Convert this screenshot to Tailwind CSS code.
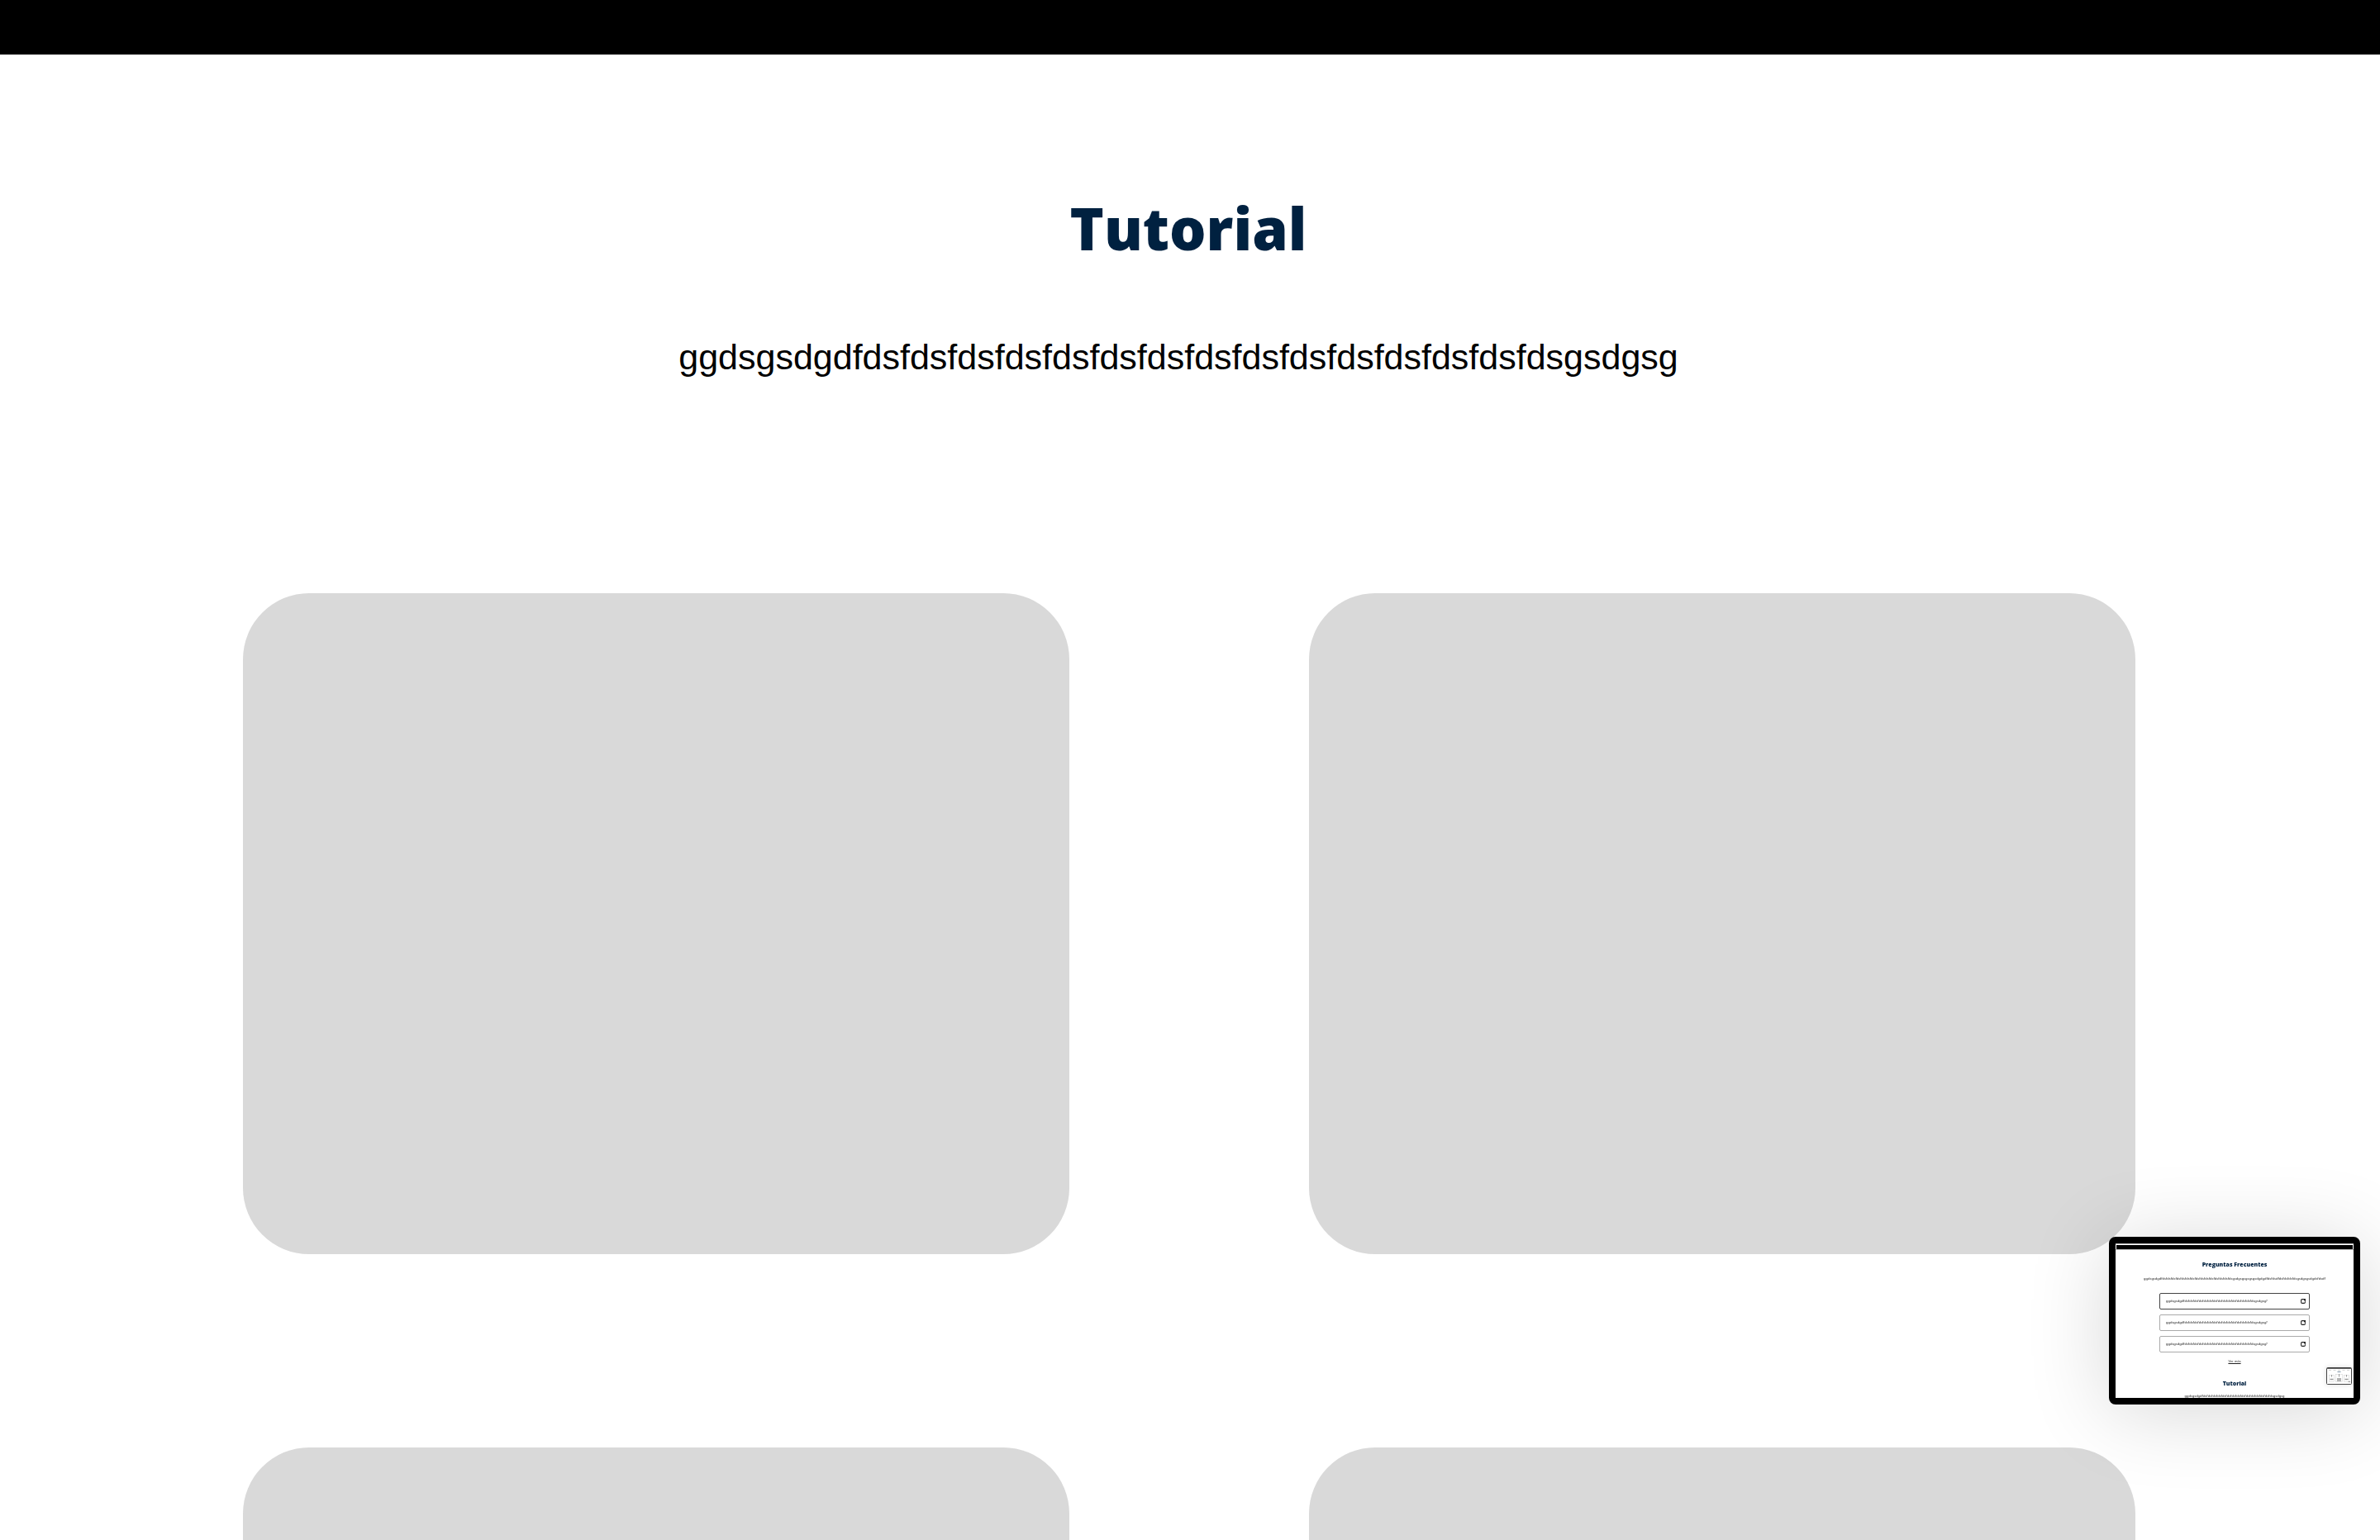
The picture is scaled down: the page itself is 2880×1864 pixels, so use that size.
<!DOCTYPE html>
<html lang="es">
<head>
<meta charset="utf-8">
<title>Tutorial</title>
<script src="https://cdn.jsdelivr.net/npm/@tailwindcss/browser@4"></script>
</head>
<body class="bg-white text-black font-['Liberation_Sans',sans-serif] h-screen overflow-hidden">
<header class="h-[66px] bg-black"></header>
<main>
  <section class="pt-[166px] text-center">
    <h1 class="pr-1 font-['Open_Sans',sans-serif] font-extrabold text-[70px] leading-[88px] text-[#002140]">Tutorial</h1>
    <p class="mt-[84px] pr-7 text-[43px] leading-[56px]">ggdsgsdgdfdsfdsfdsfdsfdsfdsfdsfdsfdsfdsfdsfdsfdsfdsfdsgsdgsg</p>
  </section>
  <section class="mt-[258px] pl-[294px] pr-[296px] grid grid-cols-2 gap-x-[290px] gap-y-[234px]">
    <div class="aspect-[5/4] rounded-[80px] bg-[#d9d9d9]"></div>
    <div class="aspect-[5/4] rounded-[80px] bg-[#d9d9d9]"></div>
    <div class="aspect-[5/4] rounded-[80px] bg-[#d9d9d9]"></div>
    <div class="aspect-[5/4] rounded-[80px] bg-[#d9d9d9]"></div>
  </section>
</main>

<!-- Floating page preview -->
<aside class="fixed right-6 bottom-[164px] w-[304px] h-[203px] rounded-lg border-8 border-black bg-white shadow-[0_8px_100px_rgba(0,0,0,0.16)] font-['Noto_Sans',sans-serif] text-[4px] leading-[6px] text-[#222]">
  <div class="h-full overflow-hidden flex flex-col items-center">
    <div class="shrink-0 self-stretch h-2 border-t border-b border-[#bbb] px-px pt-px"><div class="h-full bg-black"></div></div>
    <h2 class="shrink-0 mt-3 font-extrabold text-[7px] leading-3 text-[#002140] font-['Open_Sans',sans-serif]">Preguntas Frecuentes</h2>
    <p class="shrink-0 mt-2 whitespace-nowrap">ggdsgsdgdfdsfdsfdsfdsfdsfdsfdsfdsfdsfdsfdsfdsfdsfdsfdsgsdgsgsgsgsgsdgdgdfdsfdsdfdsfdsfdsfdsgsdgsgsdgdsfdsdf</p>
    <div class="shrink-0 mt-3.5 flex flex-col gap-1.5 w-[182px]">
      <button class="h-5 pl-[7px] pr-1 rounded-xs border border-[#444] flex items-center justify-between">
        <span>ggdsgsdgdfdsfdsfdsfdsfdsfdsfdsfdsfdsfdsfdsfdsfdsfdsfdsgsdgsg?</span>
        <svg class="size-1.5" viewBox="0 0 10 10" fill="none" stroke="#222" stroke-width="1.8"><path d="M5 1H3Q1 1 1 3V7Q1 9 3 9H7Q9 9 9 7V6M6 1H9V4Z"/></svg>
      </button>
      <button class="h-5 pl-[7px] pr-1 rounded-xs border border-[#aaa] flex items-center justify-between">
        <span>ggdsgsdgdfdsfdsfdsfdsfdsfdsfdsfdsfdsfdsfdsfdsfdsfdsfdsgsdgsg?</span>
        <svg class="size-1.5" viewBox="0 0 10 10" fill="none" stroke="#222" stroke-width="1.8"><path d="M5 1H3Q1 1 1 3V7Q1 9 3 9H7Q9 9 9 7V6M6 1H9V4Z"/></svg>
      </button>
      <button class="h-5 pl-[7px] pr-1 rounded-xs border border-[#aaa] flex items-center justify-between">
        <span>ggdsgsdgdfdsfdsfdsfdsfdsfdsfdsfdsfdsfdsfdsfdsfdsfdsfdsgsdgsg?</span>
        <svg class="size-1.5" viewBox="0 0 10 10" fill="none" stroke="#222" stroke-width="1.8"><path d="M5 1H3Q1 1 1 3V7Q1 9 3 9H7Q9 9 9 7V6M6 1H9V4Z"/></svg>
      </button>
    </div>
    <a href="#" class="shrink-0 mt-2 underline">Ver más</a>
    <h2 class="shrink-0 mt-[18px] font-extrabold text-[7px] leading-3 text-[#002140] font-['Open_Sans',sans-serif]">Tutorial</h2>
    <p class="shrink-0 mt-1.5 whitespace-nowrap">ggdsgsdgdfdsfdsfdsfdsfdsfdsfdsfdsfdsfdsfdsfdsfdsfdsfdsgsdgsg</p>
  </div>
  <svg class="absolute right-0.5 bottom-4 w-[31px] h-[21px] shadow-[0_0_6px_rgba(0,0,0,0.15)]" viewBox="0 0 31 21">
    <rect x=".5" y=".5" width="30" height="20" rx="1" fill="#fff" stroke="#444"/>
    <path d="M1 1.2H30" stroke="#222"/>
    <path d="M3 3.5H28" stroke="#bbb" stroke-width=".6" stroke-dasharray="3 2.5"/>
    <path d="M13.500 5.500H17.500" stroke="#7d93a8"/>
    <g fill="none" stroke="#ccc" stroke-width=".5"><rect x="3.500" y="9.500" width="6" height="8"/><rect x="11.500" y="8.500" width="8" height="9"/><rect x="21.500" y="9.500" width="6" height="8"/></g>
    <path d="M6.500 9V11.500M15.500 8V11.500M24.500 9V11.500" stroke="#999"/>
    <path d="M4.500 14.500H8.500M13 14H18M13 16H18M22.500 14.500H26.500" stroke="#999" stroke-width="1.500"/>
    <path d="M26.500 17.500H29" stroke="#999"/>
  </svg>
</aside>
</body>
</html>
